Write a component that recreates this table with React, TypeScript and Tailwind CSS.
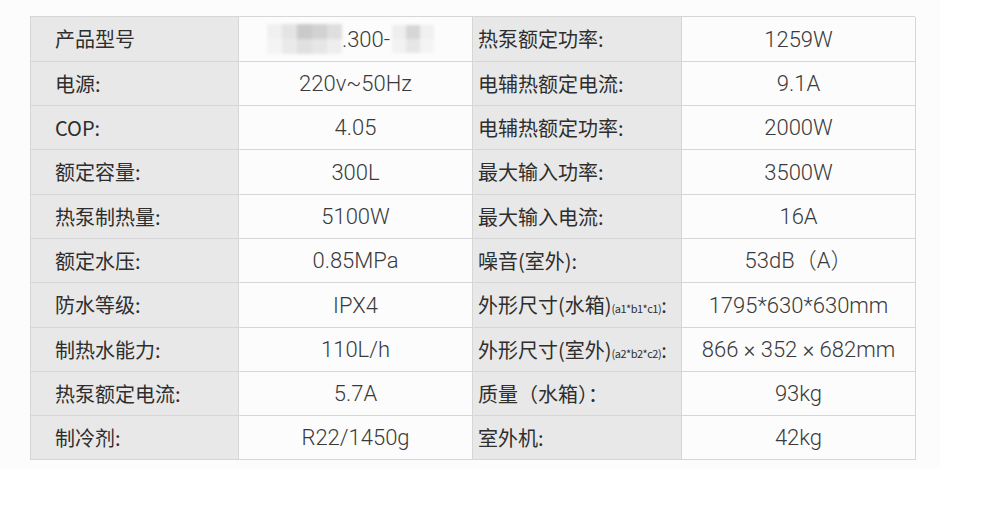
import React from "react";

type Row = {
  label1: string;
  value1: React.ReactNode;
  label2: React.ReactNode;
  value2: string;
  h: string;
};

const Blurred = () => (
  <span className="inline-flex items-center -ml-[10px]">
    <span className="flex flex-col blur-[1.5px]">
      <span className="flex">
        <span className="w-[15px] h-[15px] bg-[#f0f0f0]" />
        <span className="w-[15px] h-[15px] bg-[#e4e4e4]" />
        <span className="w-[15px] h-[15px] bg-[#cacaca]" />
        <span className="w-[15px] h-[15px] bg-[#d2d2d2]" />
        <span className="w-[15px] h-[15px] bg-[#dedede]" />
      </span>
      <span className="flex">
        <span className="w-[15px] h-[15px] bg-[#f4f4f4]" />
        <span className="w-[15px] h-[15px] bg-[#eaeaea]" />
        <span className="w-[15px] h-[15px] bg-[#e0e0e0]" />
        <span className="w-[15px] h-[15px] bg-[#e6e6e6]" />
        <span className="w-[15px] h-[15px] bg-[#eeeeee]" />
      </span>
    </span>
    <span>.300-</span>
    <span className="ml-[2px] flex flex-col blur-[1.5px]">
      <span className="flex">
        <span className="w-[14px] h-[14px] bg-[#eeeeee]" />
        <span className="w-[14px] h-[14px] bg-[#d6d6d6]" />
        <span className="w-[14px] h-[14px] bg-[#f0f0f0]" />
      </span>
      <span className="flex">
        <span className="w-[14px] h-[14px] bg-[#f2f2f2]" />
        <span className="w-[14px] h-[14px] bg-[#e6e6e6]" />
        <span className="w-[14px] h-[14px] bg-[#f4f4f4]" />
      </span>
    </span>
  </span>
);

const Sub = ({ children }: { children: string }) => (
  <span className="text-[11px] tracking-[-0.5px]">{children}</span>
);

const rows: Row[] = [
  { label1: "产品型号", value1: <Blurred />, label2: "热泵额定功率:", value2: "1259W", h: "h-[45px]" },
  { label1: "电源:", value1: "220v~50Hz", label2: "电辅热额定电流:", value2: "9.1A", h: "h-[44px]" },
  { label1: "COP:", value1: "4.05", label2: "电辅热额定功率:", value2: "2000W", h: "h-[44px]" },
  { label1: "额定容量:", value1: "300L", label2: "最大输入功率:", value2: "3500W", h: "h-[45px]" },
  { label1: "热泵制热量:", value1: "5100W", label2: "最大输入电流:", value2: "16A", h: "h-[44px]" },
  { label1: "额定水压:", value1: "0.85MPa", label2: "噪音(室外):", value2: "53dB（A）", h: "h-[44px]" },
  {
    label1: "防水等级:",
    value1: "IPX4",
    label2: (
      <span>
        外形尺寸(水箱)<Sub>(a1*b1*c1)</Sub>:
      </span>
    ),
    value2: "1795*630*630mm",
    h: "h-[45px]",
  },
  {
    label1: "制热水能力:",
    value1: "110L/h",
    label2: (
      <span>
        外形尺寸(室外)<Sub>(a2*b2*c2)</Sub>:
      </span>
    ),
    value2: "866 × 352 × 682mm",
    h: "h-[44px]",
  },
  { label1: "热泵额定电流:", value1: "5.7A", label2: "质量（水箱）：", value2: "93kg", h: "h-[44px]" },
  { label1: "制冷剂:", value1: "R22/1450g", label2: "室外机:", value2: "42kg", h: "h-[44px]" },
];

const labelFont = "font-['Noto_Sans_CJK_SC','Noto_Sans',sans-serif] text-[20px] text-[#2e2e2e]";
const valueFont = "font-['Roboto','Noto_Sans_CJK_SC',sans-serif] font-light text-[22px] text-[#3a3a3a]";

export default function App() {
  return (
    <div className="w-[986px] h-[510px] bg-white">
      <div className="w-[940px] h-[469px] bg-[#fcfcfc] pl-[30px] pt-[16px]">
        <div className="w-[885px] border-t border-l border-[#d6d6d6]">
          {rows.map((r, i) => (
            <div key={i} className={`grid grid-cols-[208px_234px_209px_234px] ${r.h}`}>
              <div className={`flex items-center pl-[24px] bg-[#e8e8e8] border-r border-b border-[#d6d6d6] ${labelFont}`}>
                {r.label1}
              </div>
              <div className={`flex items-center justify-center border-r border-b border-[#d6d6d6] ${valueFont}`}>
                {r.value1}
              </div>
              <div className={`flex items-center pl-[5px] bg-[#e8e8e8] border-r border-b border-[#d6d6d6] whitespace-nowrap ${labelFont}`}>
                {r.label2}
              </div>
              <div className={`flex items-center justify-center border-r border-b border-[#d6d6d6] whitespace-nowrap ${valueFont}`}>
                {r.value2}
              </div>
            </div>
          ))}
        </div>
      </div>
    </div>
  );
}
